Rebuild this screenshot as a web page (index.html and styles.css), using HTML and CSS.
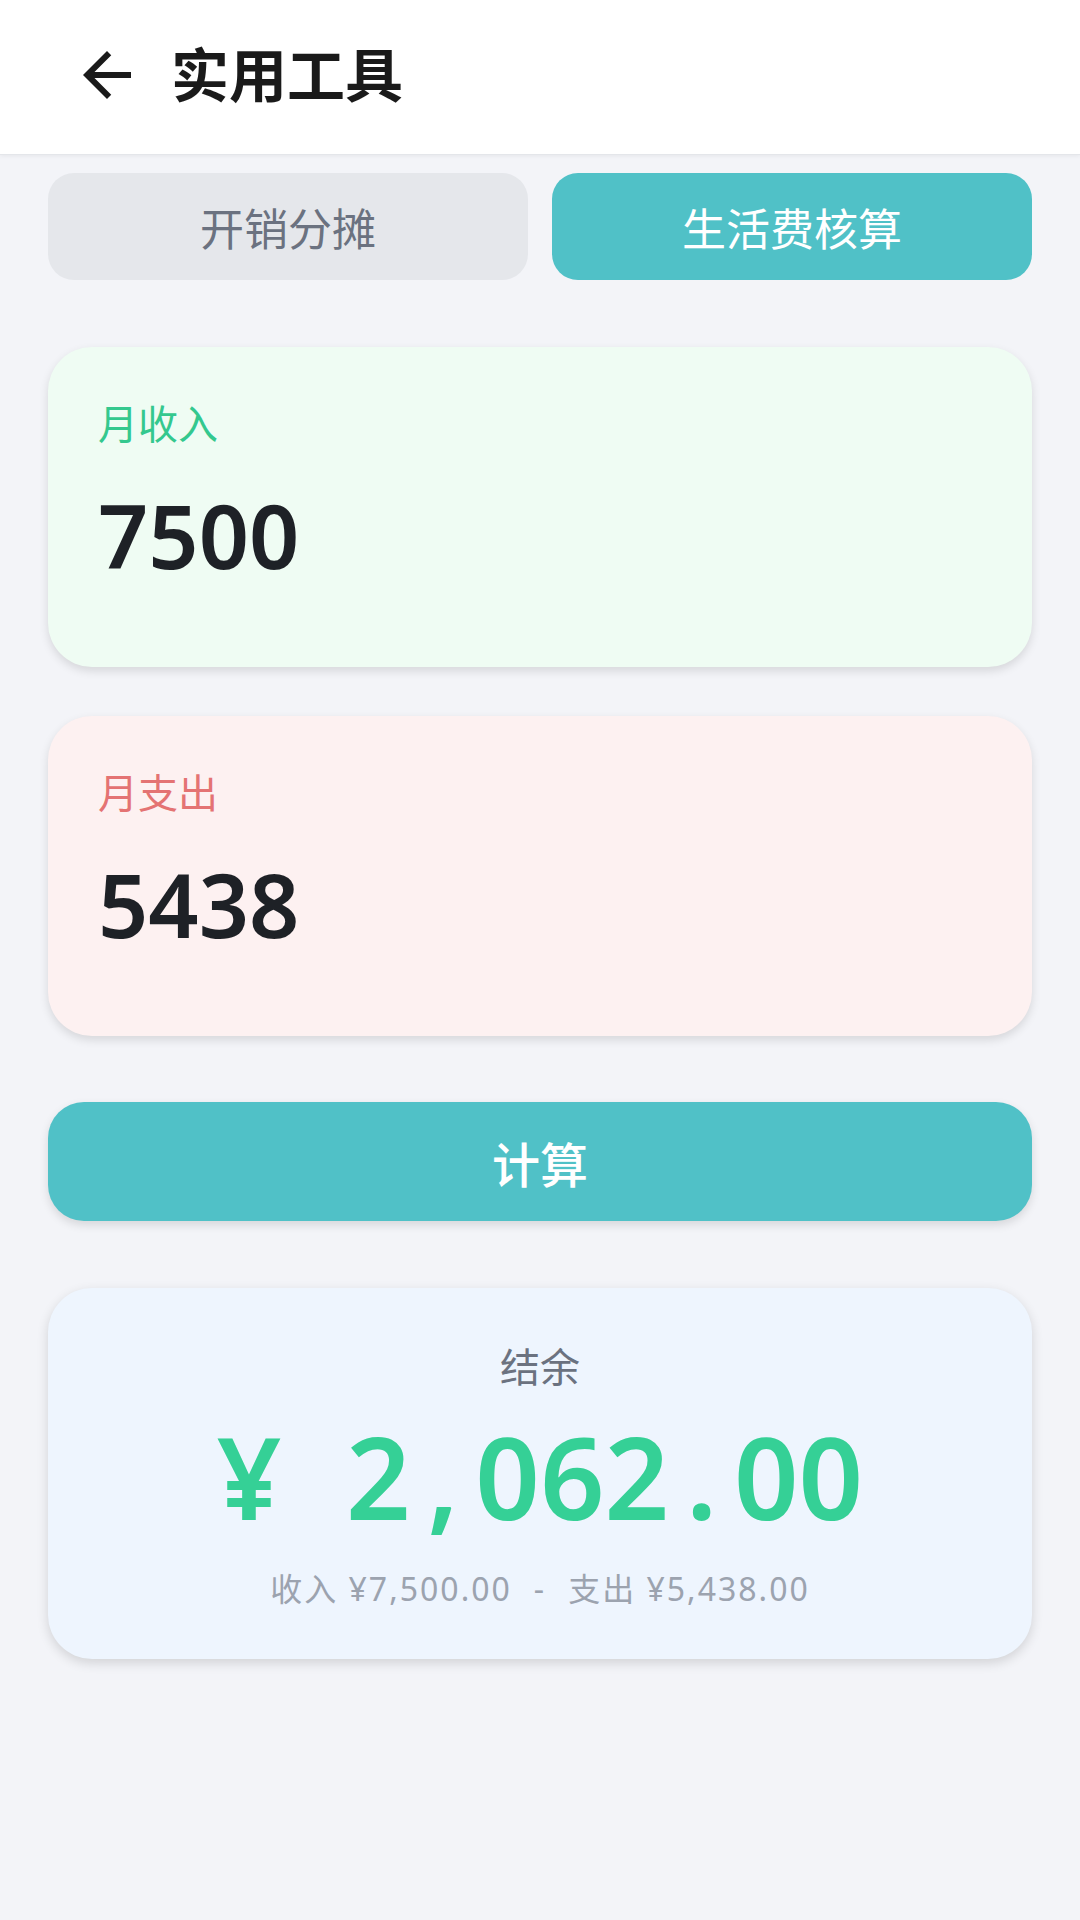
FILE: index.html
```html
<!DOCTYPE html>
<html lang="zh-CN">
<head>
  <meta charset="UTF-8" />
  <meta name="viewport" content="width=device-width, initial-scale=1.0"/>
  <title>实用工具</title>
  <link rel="stylesheet" href="styles.css">
</head>
<body>
  <header class="topbar">
    <button class="back" aria-label="返回">
      <svg viewBox="0 0 24 24" width="72" height="72"><path d="M20 11H7.83l5.59-5.59L12 4l-8 8 8 8 1.41-1.41L7.83 13H20v-2z" fill="#1a1a1a"/></svg>
    </button>
    <h1 class="title">实用工具</h1>
  </header>

  <main class="page">
    <div class="tabs">
      <button class="tab">开销分摊</button>
      <button class="tab tab-active">生活费核算</button>
    </div>

    <section class="field field-income">
      <div class="field-label">月收入</div>
      <div class="field-value">7500</div>
    </section>

    <section class="field field-expense">
      <div class="field-label">月支出</div>
      <div class="field-value">5438</div>
    </section>

    <button class="calc">计算</button>

    <section class="result">
      <div class="result-label">结余</div>
      <div class="result-amount"><span class="cell">¥</span><span class="cell"></span>2<span class="cell">,</span>062<span class="cell">.</span>00</div>
      <div class="result-detail">收入 ¥7,500.00<span class="sep">-</span>支出 ¥5,438.00</div>
    </section>
  </main>
</body>
</html>
```
FILE: styles.css
```css
body {
  margin: 0;
  min-height: 1920px;
  background-color: #f3f4f8;
  font-family: 'Noto Sans', 'Noto Sans CJK SC', sans-serif;
  color: #1e2126;
}
button {
  font-family: inherit;
  border: none;
  cursor: pointer;
}

.topbar {
  height: 155px;
  box-sizing: border-box;
  padding: 0 0 4px 71px;
  display: flex;
  align-items: center;
  gap: 28px;
  background: #fff;
  border-bottom: 1px solid #e4e6ea;
  box-shadow: 0 1px 4px rgba(0, 0, 0, 0.06);
}
.back {
  background: none;
  padding: 0;
  width: 72px;
  height: 72px;
  display: flex;
}
.title {
  margin: 0;
  font-size: 58px;
  font-weight: 700;
  line-height: 80px;
  color: #1a1a1a;
}

.page {
  padding: 18px 48px 0;
}

.tabs {
  display: grid;
  grid-template-columns: 1fr 1fr;
  gap: 24px;
}
.tab {
  height: 107px;
  border-radius: 26px;
  background: #e5e7eb;
  color: #6b7280;
  font-size: 44px;
  font-weight: 400;
}
.tab-active {
  background: #50c1c7;
  color: #fff;
}

.field {
  height: 320px;
  box-sizing: border-box;
  margin-top: 67px;
  padding: 49px 50px 0;
  border-radius: 44px;
  box-shadow: 0 4px 10px rgba(0, 0, 0, 0.12);
}
.field + .field {
  margin-top: 49px;
}
.field-income {
  background: #effcf3;
}
.field-expense {
  background: #fdf1f1;
}
.field-label {
  font-size: 40px;
  line-height: 56px;
}
.field-income .field-label {
  color: #34c88e;
}
.field-expense .field-label {
  color: #e47373;
}
.field-value {
  margin-top: 29px;
  font-size: 88px;
  line-height: 108px;
  font-weight: 600;
  color: #1e2126;
}

.calc {
  display: block;
  width: 100%;
  height: 119px;
  margin-top: 66px;
  border-radius: 36px;
  background: #50c1c7;
  color: #fff;
  font-size: 48px;
  font-weight: 500;
  box-shadow: 0 4px 10px rgba(0, 0, 0, 0.12);
}

.result {
  height: 371px;
  box-sizing: border-box;
  margin-top: 67px;
  padding-top: 51px;
  border-radius: 44px;
  background: #eef5fe;
  text-align: center;
  box-shadow: 0 4px 12px rgba(0, 0, 0, 0.14);
}
.result-label {
  font-size: 40px;
  line-height: 56px;
  color: #6b7280;
}
.result-amount {
  margin-top: 16px;
  font-size: 113px;
  line-height: 130px;
  font-weight: 600;
  color: #35d096;
}
.result-amount .cell {
  display: inline-block;
  width: 1ch;
  text-align: center;
}
.result-detail {
  margin-top: 24px;
  font-size: 32px;
  line-height: 48px;
  letter-spacing: 2px;
  color: #9ca3af;
}
.result-detail .sep {
  margin: 0 22px;
}
```
